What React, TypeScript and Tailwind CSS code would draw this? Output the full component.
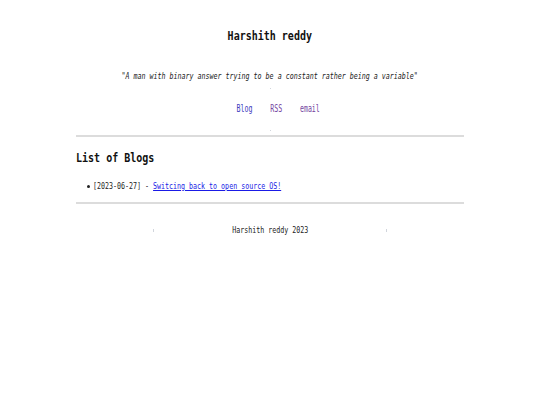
const mono = "font-['DejaVu_Sans_Mono','Liberation_Mono',monospace]";

function Squeeze({ children, className = "", origin = "origin-center" }: { children: React.ReactNode; className?: string; origin?: string }) {
  return <span className={`inline-block whitespace-nowrap shrink-0 ${origin} ${className}`}>{children}</span>;
}

export default function App() {
  return (
    <div className={`w-[540px] h-[405px] bg-white text-[#111] ${mono}`}>
      <div className="mx-auto w-[388px]">
        <header className="pt-[27px]">
          <h1 className="flex justify-center h-[18px] leading-[18px] text-[13px] font-bold">
            <Squeeze className="scale-x-[0.77]">Harshith reddy</Squeeze>
          </h1>
          <p className="flex justify-center mt-[25px] h-[12px] leading-[12px] text-[9.5px] italic text-[#222]">
            <Squeeze className="scale-x-[0.7]">"A man with binary answer trying to be a constant rather being a variable"</Squeeze>
          </p>
          <div className="mt-[6px] mx-auto w-px h-px bg-gray-300" />
          <nav className="flex justify-center pl-[16px] mt-[14px] h-[12px] leading-[12px] text-[10px]">
            <Squeeze className="scale-x-[0.66]">
              <span className="inline-flex gap-[27px]">
                <a href="#" className="text-[#3b3bbd]">Blog</a>
                <a href="#" className="text-[#7444a0]">RSS</a>
                <a href="#" className="text-[#7444a0]">email</a>
              </span>
            </Squeeze>
          </nav>
          <div className="mt-[15px] mx-auto w-px h-px bg-gray-300" />
        </header>
        <hr className="mt-[4px] border-0 h-[2px] bg-[#dcdcdc]" />
        <main>
          <h2 className="mt-[12px] h-[18px] leading-[18px] text-[13px] font-bold">
            <Squeeze origin="origin-left" className="scale-x-[0.77]">List of Blogs</Squeeze>
          </h2>
          <ul className="mt-[13px] pl-[11px]">
            <li className="flex items-center h-[12px] leading-[12px] text-[9.5px] text-[#222]">
              <span className="w-[3px] h-[3px] rounded-full bg-[#222] mr-[3px]" />
              <Squeeze origin="origin-left" className="scale-x-[0.7]">
                [2023-06-27] - <a href="#" className="text-[#1a1ae6] underline">Switcing back to open source OS!</a>
              </Squeeze>
            </li>
          </ul>
        </main>
        <hr className="mt-[10px] border-0 h-[2px] bg-[#dcdcdc]" />
        <footer className="mt-[20px] h-[12px] leading-[12px] text-[9.5px] text-[#222] flex items-center justify-center">
          <span className="w-px h-[3px] bg-gray-300" />
          <span className="w-[232px] flex justify-center">
            <Squeeze className="scale-x-[0.7]">Harshith reddy 2023</Squeeze>
          </span>
          <span className="w-px h-[3px] bg-gray-300" />
        </footer>
      </div>
    </div>
  );
}
